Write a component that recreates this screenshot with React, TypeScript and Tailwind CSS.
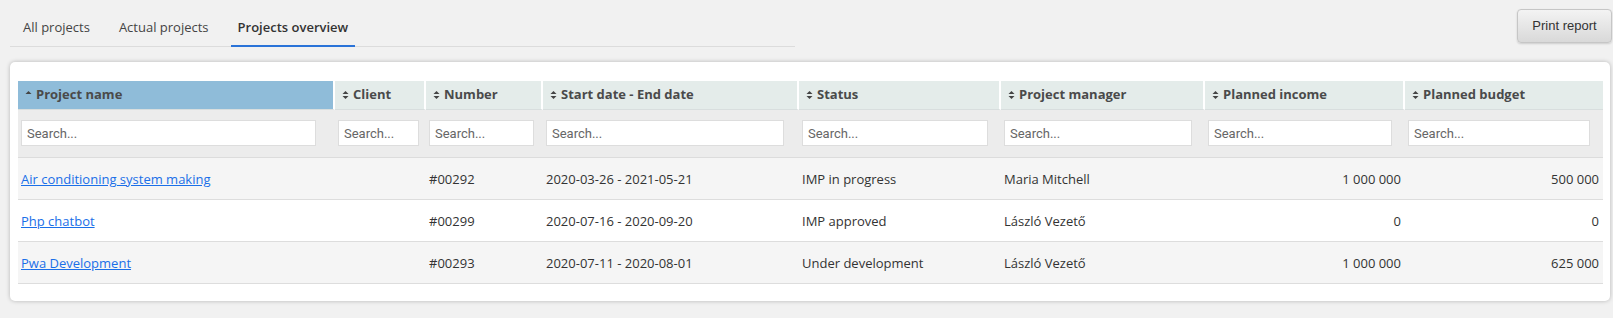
import React from 'react';

type Col = { key: string; label: string; width: number; right?: boolean };

const cols: Col[] = [
  { key: 'name', label: 'Project name', width: 317 },
  { key: 'client', label: 'Client', width: 91 },
  { key: 'number', label: 'Number', width: 117 },
  { key: 'dates', label: 'Start date - End date', width: 256 },
  { key: 'status', label: 'Status', width: 202 },
  { key: 'manager', label: 'Project manager', width: 204 },
  { key: 'income', label: 'Planned income', width: 200, right: true },
  { key: 'budget', label: 'Planned budget', width: 198, right: true },
];

const rows = [
  { name: 'Air conditioning system making', client: '', number: '#00292', dates: '2020-03-26 - 2021-05-21', status: 'IMP in progress', manager: 'Maria Mitchell', income: '1 000 000', budget: '500 000' },
  { name: 'Php chatbot', client: '', number: '#00299', dates: '2020-07-16 - 2020-09-20', status: 'IMP approved', manager: 'László Vezető', income: '0', budget: '0' },
  { name: 'Pwa Development', client: '', number: '#00293', dates: '2020-07-11 - 2020-08-01', status: 'Under development', manager: 'László Vezető', income: '1 000 000', budget: '625 000' },
];

const SortIcon = ({ active }: { active?: boolean }) => (
  <svg width="7" height="10" viewBox="0 0 7 10" className="shrink-0">
    <path d="M0.5 4 L3.5 1 L6.5 4 Z" fill="#444" />
    {!active && <path d="M0.5 6 L3.5 9 L6.5 6 Z" fill="#444" />}
  </svg>
);

const tabs = ['All projects', 'Actual projects', 'Projects overview'];

export default function App() {
  return (
    <div className="min-h-[318px] w-full bg-[#f1f1f1] font-['Open_Sans',sans-serif] text-[13px] text-[#333]">
      <div className="flex items-start justify-between pl-[10px] pr-[1px] pt-[9px]">
        <div className="mt-[6px] flex w-[785px] gap-[15px] border-b border-[#dcdcdc] pl-[6px]">
          {tabs.map((t, i) => (
            <div
              key={t}
              className={
                'px-[7px] pb-[7px] pt-[3px] ' +
                (i === 2 ? '-mb-px border-b-2 border-[#2a73d8] font-semibold text-[#333]' : 'text-[#444]')
              }
            >
              {t}
            </div>
          ))}
        </div>
        <button className="h-[34px] w-[95px] rounded-[4px] border border-[#c6c6c6] bg-gradient-to-b from-[#f3f3f3] to-[#d9d9d9] font-['Liberation_Sans',sans-serif] text-[13px] text-[#333] shadow-[0_1px_2px_rgba(0,0,0,0.15)]">
          Print report
        </button>
      </div>

      <div className="ml-[10px] mr-[3px] mt-[15px] rounded-[5px] bg-white pb-[17px] pl-[8px] pr-[7px] pt-[19px] shadow-[0_0_4px_rgba(0,0,0,0.25)]">
        <table className="w-[1585px] table-fixed border-separate border-spacing-0">
          <colgroup>
            {cols.map((c) => (
              <col key={c.key} style={{ width: c.width }} />
            ))}
          </colgroup>
          <thead>
            <tr className="h-[29px]">
              {cols.map((c, i) => (
                <th
                  key={c.key}
                  className={
                    'border-b border-[#d8dede] px-[7px] text-left font-bold text-[#4a4a4a] ' +
                    (i < cols.length - 1 ? 'border-r-2 border-r-white ' : '') +
                    (i === 0 ? 'bg-[#8fbcd9]' : 'bg-[#e4ecea]')
                  }
                >
                  <div className="flex items-center gap-[4px]">
                    <SortIcon active={i === 0} />
                    <span>{c.label}</span>
                  </div>
                </th>
              ))}
            </tr>
            <tr className="h-[48px] bg-[#ececec]">
              {cols.map((c) => (
                <th key={c.key} className="border-b border-[#dcdcdc] px-[3px] text-left font-normal">
                  <input
                    placeholder="Search..."
                    className="h-[26px] w-[95%] border border-[#dddddd] bg-white px-[5px] font-['Roboto',sans-serif] text-[13px] text-[#555] placeholder:text-[#666] outline-none"
                  />
                </th>
              ))}
            </tr>
          </thead>
          <tbody>
            {rows.map((r, ri) => (
              <tr key={r.number} className={'h-[42px] ' + (ri % 2 === 0 ? 'bg-[#f5f5f5]' : 'bg-white')}>
                {cols.map((c) => (
                  <td
                    key={c.key}
                    className={
                      'border-b border-[#dddddd] px-[3px] pt-[3px] ' + (c.right ? 'pr-[4px] text-right' : 'text-left')
                    }
                  >
                    {c.key === 'name' ? (
                      <a href="#" className="text-[#1a6fe8] underline">
                        {r.name}
                      </a>
                    ) : (
                      (r as Record<string, string>)[c.key]
                    )}
                  </td>
                ))}
              </tr>
            ))}
          </tbody>
        </table>
      </div>
    </div>
  );
}
